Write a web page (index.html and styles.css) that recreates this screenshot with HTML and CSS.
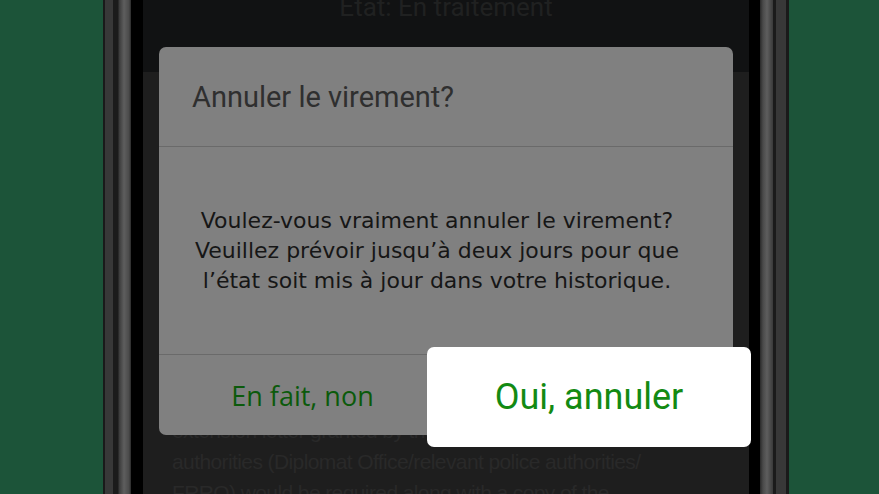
FILE: index.html
```html
<!DOCTYPE html>
<html lang="fr">
<head>
  <meta charset="UTF-8">
  <title>Annuler le virement</title>
  <link rel="stylesheet" href="styles.css">
</head>
<body>

  <div class="phone">
    <div class="bezel bezel-left"></div>

    <div class="screen">
      <div class="app-header">
        <div class="app-status">État: En traitement</div>
      </div>

      <div class="app-content">
        <p>
          extension letter granted by the<br>
          authorities (Diplomat Office/relevant police authorities/<br>
          FRRO) would be required along with a copy of the
        </p>
      </div>

      <!-- DIALOGUE -->
      <div class="dialog">
        <div class="dialog-title">Annuler le virement?</div>
        <div class="dialog-body">
          Voulez-vous vraiment annuler le virement?<br>
          Veuillez prévoir jusqu’à deux jours pour que<br>
          l’état soit mis à jour dans votre historique.
        </div>
        <div class="dialog-actions">
          <button class="dialog-btn">En fait, non</button>
          <button class="dialog-btn">Oui, annuler</button>
        </div>
      </div>
    </div>

    <div class="bezel bezel-right"></div>

    <!-- bouton mis en avant -->
    <button class="highlight-btn">Oui, annuler</button>
  </div>

</body>
</html>
```

FILE: styles.css
```css
html, body {
  margin: 0;
  height: 100%;
}

body {
  background-color: #1c5439;
  font-family: 'Liberation Sans', Arial, sans-serif;
  overflow: hidden;
  padding-left: 103px;
}

.phone {
  position: relative;
  display: flex;
  height: 494px;
  width: 686px;
}

.bezel {
  width: 40px;
  flex-shrink: 0;
}

.bezel-left {
  background: linear-gradient(to right,
    #1a1a1a 0, #1a1a1a 2px,
    #383838 2px, #383838 10px,
    #1b1b1b 10px, #1b1b1b 15px,
    #3a3a3a 16px, #5e5e5e 21px, #4a4a4a 26px, #2a2a2a 28px,
    #000 28px, #000 40px);
}

.bezel-right {
  background: linear-gradient(to right,
    #000 0, #000 11px,
    #2a2a2a 11px, #4a4a4a 14px, #5e5e5e 18px, #3a3a3a 24px,
    #1b1b1b 24px, #1b1b1b 27px,
    #383838 27px, #383838 37px,
    #1a1a1a 37px, #1a1a1a 40px);
}

.screen {
  position: relative;
  width: 606px;
  flex-shrink: 0;
  background-color: #1e1e1e;
  overflow: hidden;
}

.app-header {
  height: 72px;
  background-color: #111213;
  text-align: center;
  overflow: hidden;
}

.app-status {
  margin-top: -10px;
  font-family: 'Roboto', sans-serif;
  font-size: 26px;
  line-height: 34px;
  color: #202121;
}

.app-content {
  padding: 343px 29px 0;
  color: #292929;
  font-size: 21px;
  line-height: 31px;
  letter-spacing: -0.6px;
}

.app-content p {
  margin: 0;
}

/* DIALOGUE */
.dialog {
  position: absolute;
  left: 16px;
  top: 47px;
  width: 574px;
  height: 388px;
  background-color: #808080;
  border-radius: 7px;
  display: flex;
  flex-direction: column;
}

.dialog-title {
  height: 99px;
  padding-left: 33px;
  border-bottom: 1px solid #6a6a6a;
  font-family: 'Roboto', sans-serif;
  font-size: 29px;
  line-height: 100px;
  color: #2f2f2f;
}

.dialog-body {
  flex: 1;
  display: flex;
  align-items: center;
  justify-content: center;
  padding-right: 18px;
  text-align: center;
  font-family: 'DejaVu Sans', sans-serif;
  font-size: 22px;
  line-height: 30px;
  color: #161616;
  border-bottom: 1px solid #6a6a6a;
}

.dialog-actions {
  height: 80px;
  display: flex;
}

.dialog-btn {
  flex: 1;
  background: none;
  border: none;
  font-family: 'Open Sans', sans-serif;
  font-size: 27px;
  color: #0b5a0b;
}

.highlight-btn {
  position: absolute;
  left: 324px;
  top: 347px;
  width: 324px;
  height: 100px;
  background-color: #fff;
  border: none;
  border-radius: 7px;
  font-family: 'Roboto', sans-serif;
  font-size: 36px;
  color: #138a13;
}
```
